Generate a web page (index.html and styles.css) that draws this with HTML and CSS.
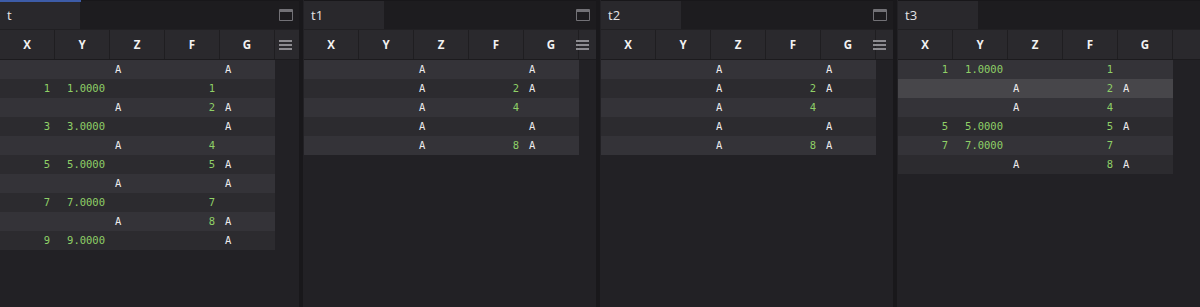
FILE: index.html
```html
<!DOCTYPE html>
<html>
<head>
<meta charset="utf-8">
<link rel="stylesheet" href="styles.css">
</head>
<body>
<div class="layout">
  <section class="panel p1">
    <div class="tabbar">
      <div class="tab focused">t</div>
      <span class="win-icon"></span>
    </div>
    <div class="grid">
      <div class="head">
        <div class="hc">X</div><div class="hc">Y</div><div class="hc">Z</div><div class="hc">F</div><div class="hc">G</div>
        <span class="menu-icon"><i></i><i></i><i></i></span>
      </div>
      <div class="body">
        <div class="row"><span class="c"></span><span class="c"></span><span class="c s">A</span><span class="c"></span><span class="c s">A</span></div>
        <div class="row"><span class="c n">1</span><span class="c n">1.0000</span><span class="c"></span><span class="c n">1</span><span class="c"></span></div>
        <div class="row"><span class="c"></span><span class="c"></span><span class="c s">A</span><span class="c n">2</span><span class="c s">A</span></div>
        <div class="row"><span class="c n">3</span><span class="c n">3.0000</span><span class="c"></span><span class="c"></span><span class="c s">A</span></div>
        <div class="row"><span class="c"></span><span class="c"></span><span class="c s">A</span><span class="c n">4</span><span class="c"></span></div>
        <div class="row"><span class="c n">5</span><span class="c n">5.0000</span><span class="c"></span><span class="c n">5</span><span class="c s">A</span></div>
        <div class="row"><span class="c"></span><span class="c"></span><span class="c s">A</span><span class="c"></span><span class="c s">A</span></div>
        <div class="row"><span class="c n">7</span><span class="c n">7.0000</span><span class="c"></span><span class="c n">7</span><span class="c"></span></div>
        <div class="row"><span class="c"></span><span class="c"></span><span class="c s">A</span><span class="c n">8</span><span class="c s">A</span></div>
        <div class="row"><span class="c n">9</span><span class="c n">9.0000</span><span class="c"></span><span class="c"></span><span class="c s">A</span></div>
      </div>
    </div>
  </section>

  <section class="panel p2">
    <div class="tabbar">
      <div class="tab">t1</div>
      <span class="win-icon"></span>
    </div>
    <div class="grid">
      <div class="head">
        <div class="hc">X</div><div class="hc">Y</div><div class="hc">Z</div><div class="hc">F</div><div class="hc">G</div>
        <span class="menu-icon"><i></i><i></i><i></i></span>
      </div>
      <div class="body">
        <div class="row"><span class="c"></span><span class="c"></span><span class="c s">A</span><span class="c"></span><span class="c s">A</span></div>
        <div class="row"><span class="c"></span><span class="c"></span><span class="c s">A</span><span class="c n">2</span><span class="c s">A</span></div>
        <div class="row"><span class="c"></span><span class="c"></span><span class="c s">A</span><span class="c n">4</span><span class="c"></span></div>
        <div class="row"><span class="c"></span><span class="c"></span><span class="c s">A</span><span class="c"></span><span class="c s">A</span></div>
        <div class="row"><span class="c"></span><span class="c"></span><span class="c s">A</span><span class="c n">8</span><span class="c s">A</span></div>
      </div>
    </div>
  </section>

  <section class="panel p3">
    <div class="tabbar">
      <div class="tab">t2</div>
      <span class="win-icon"></span>
    </div>
    <div class="grid">
      <div class="head">
        <div class="hc">X</div><div class="hc">Y</div><div class="hc">Z</div><div class="hc">F</div><div class="hc">G</div>
        <span class="menu-icon"><i></i><i></i><i></i></span>
      </div>
      <div class="body">
        <div class="row"><span class="c"></span><span class="c"></span><span class="c s">A</span><span class="c"></span><span class="c s">A</span></div>
        <div class="row"><span class="c"></span><span class="c"></span><span class="c s">A</span><span class="c n">2</span><span class="c s">A</span></div>
        <div class="row"><span class="c"></span><span class="c"></span><span class="c s">A</span><span class="c n">4</span><span class="c"></span></div>
        <div class="row"><span class="c"></span><span class="c"></span><span class="c s">A</span><span class="c"></span><span class="c s">A</span></div>
        <div class="row"><span class="c"></span><span class="c"></span><span class="c s">A</span><span class="c n">8</span><span class="c s">A</span></div>
      </div>
    </div>
  </section>

  <section class="panel p4">
    <div class="tabbar">
      <div class="tab">t3</div>
    </div>
    <div class="grid">
      <div class="head">
        <div class="hc">X</div><div class="hc">Y</div><div class="hc">Z</div><div class="hc">F</div><div class="hc">G</div>
      </div>
      <div class="body">
        <div class="row"><span class="c n">1</span><span class="c n">1.0000</span><span class="c"></span><span class="c n">1</span><span class="c"></span></div>
        <div class="row hover"><span class="c"></span><span class="c"></span><span class="c s">A</span><span class="c n">2</span><span class="c s">A</span></div>
        <div class="row"><span class="c"></span><span class="c"></span><span class="c s">A</span><span class="c n">4</span><span class="c"></span></div>
        <div class="row"><span class="c n">5</span><span class="c n">5.0000</span><span class="c"></span><span class="c n">5</span><span class="c s">A</span></div>
        <div class="row"><span class="c n">7</span><span class="c n">7.0000</span><span class="c"></span><span class="c n">7</span><span class="c"></span></div>
        <div class="row"><span class="c"></span><span class="c"></span><span class="c s">A</span><span class="c n">8</span><span class="c s">A</span></div>
      </div>
    </div>
  </section>
</div>
</body>
</html>
```

FILE: styles.css
```css
html, body {
  margin: 0;
  padding: 0;
  background: #19181b;
  width: 1200px;
  height: 307px;
  overflow: hidden;
}

.layout {
  display: flex;
  gap: 4px;
  height: 307px;
}

.panel {
  position: relative;
  display: flex;
  flex-direction: column;
  background: #222125;
  height: 307px;
  box-sizing: border-box;
}

.p1 { width: 299px; }
.p2 { width: 293px; padding-left: 1px; }
.p3 { width: 293px; padding-left: 1px; }
.p4 { flex: 1; padding-left: 1px; }

.tabbar {
  position: relative;
  height: 28px;
  background: #1d1c1f;
  border-top: 1px solid #18171a;
  display: flex;
  align-items: stretch;
}

.tab {
  position: relative;
  width: 80px;
  box-sizing: border-box;
  padding: 0 0 0 7px;
  background: #29282c;
  color: #e4e4e6;
  font-family: "Open Sans", "Noto Sans", sans-serif;
  font-size: 13px;
  line-height: 28px;
}

.tab.focused::before {
  content: "";
  position: absolute;
  left: 0;
  right: -1px;
  top: -1px;
  height: 2px;
  background: #3d5ca8;
}

.win-icon {
  position: absolute;
  right: 6px;
  top: 8px;
  width: 12px;
  height: 8px;
  border: 1px solid #727176;
  border-top: 3px solid #727176;
  border-radius: 1px;
}

.grid {
  display: flex;
  flex-direction: column;
}

.head {
  position: relative;
  display: flex;
  height: 29px;
  background: #2a292d;
  border-top: 1px solid #212023;
  border-bottom: 1px solid #1c1b1e;
}

.hc {
  width: 55px;
  box-sizing: border-box;
  border-right: 1px solid #1f1e21;
  color: #f2f2f2;
  font-family: "Open Sans", "Noto Sans", sans-serif;
  font-weight: 700;
  font-size: 11.5px;
  line-height: 29px;
  text-align: center;
}

.menu-icon {
  position: absolute;
  right: 7px;
  top: 10px;
  width: 13px;
  height: 10px;
  display: flex;
  flex-direction: column;
  justify-content: space-between;
}

.menu-icon i {
  display: block;
  height: 2px;
  background: #8c8b90;
}

.body {
  display: flex;
  flex-direction: column;
  width: 275px;
}

.row {
  display: flex;
  height: 19px;
  background: #343338;
}

.row:nth-child(even) {
  background: #2c2b2f;
}

.row.hover {
  background: #47464a;
}

.c {
  width: 55px;
  box-sizing: border-box;
  padding: 0 5px;
  font-family: "DejaVu Sans Mono", monospace;
  font-size: 10.5px;
  line-height: 19px;
  white-space: nowrap;
}

.c.n {
  color: #8fd067;
  text-align: right;
}

.c.s {
  color: #ececec;
  text-align: left;
}
```
